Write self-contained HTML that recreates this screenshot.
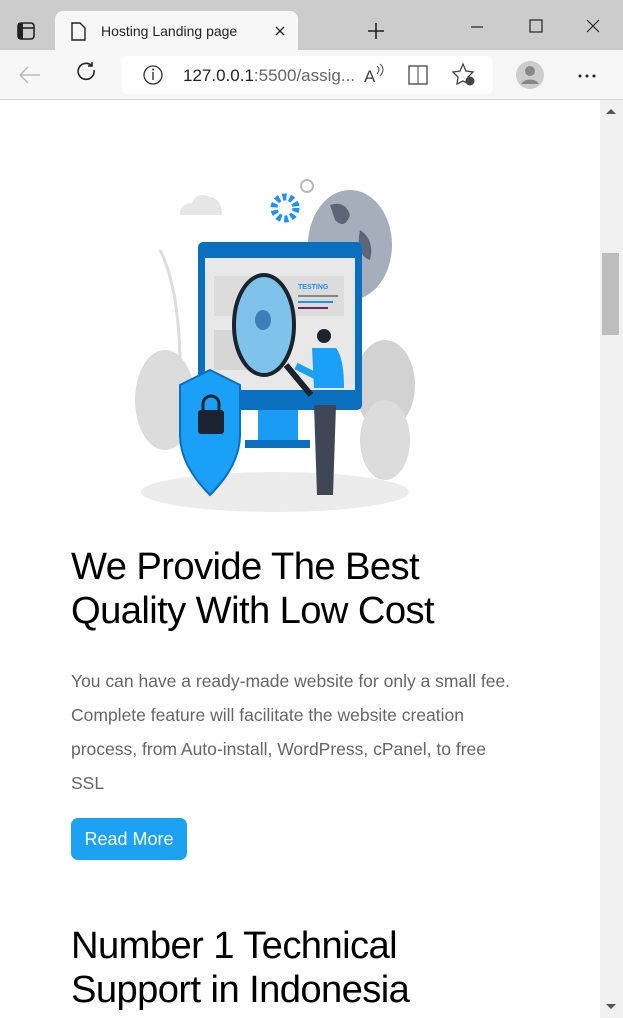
<!DOCTYPE html>
<html><head><style>
*{margin:0;padding:0;box-sizing:border-box}
body{width:623px;height:1018px;overflow:hidden;background:#fff;font-family:"Liberation Sans",sans-serif;position:relative}
.tabbar{position:absolute;left:0;top:0;width:623px;height:50px;background:#cccccc}
.tab{position:absolute;left:55px;top:11px;width:243px;height:40px;background:#f7f7f7;border-radius:8px 8px 0 0}
.toolbar{position:absolute;left:0;top:50px;width:623px;height:50px;background:#f7f7f7;border-bottom:1px solid #d6d6d6}
.url{position:absolute;left:121px;top:56px;width:372px;height:38px;background:#fff;border-radius:6px}
.sb{position:absolute;left:600px;top:100px;width:23px;height:918px;background:#f1f1f1}
h1{position:absolute;left:71px;font-size:38.2px;font-weight:normal;line-height:44px;color:#000;letter-spacing:-0.6px;font-family:"Liberation Sans",sans-serif}
p{position:absolute;left:71px;top:664px;width:450px;font-size:17.5px;line-height:34px;color:#666}
.btn{position:absolute;left:71px;top:818px;width:116px;height:42px;background:#1da1f2;border-radius:7px;color:#fff;font-size:18px;line-height:42px;text-align:center}
</style></head><body>
<div class="tabbar"></div>
<div class="tab"></div>
<svg width="623" height="50" style="position:absolute;left:0;top:0">
<rect x="18" y="23" width="16" height="16" rx="3" fill="none" stroke="#222" stroke-width="1.6"/><line x1="18" y1="28" x2="34" y2="28" stroke="#222" stroke-width="1.6"/><rect x="18" y="23" width="5" height="16" fill="#222"/>
<path d="M72 23h8l5 5v12h-13z" fill="none" stroke="#222" stroke-width="1.4"/>
<text x="101" y="36" font-size="14" fill="#222" font-family="Liberation Sans">Hosting Landing page</text>
<path d="M276 27l8 8M284 27l-8 8" stroke="#222" stroke-width="1.4"/>
<path d="M368 31h16M376 23v16" stroke="#222" stroke-width="1.6"/>
<line x1="471" y1="27" x2="483" y2="27" stroke="#222" stroke-width="1.2"/>
<rect x="530" y="20" width="12" height="12" fill="none" stroke="#222" stroke-width="1.2"/>
<path d="M587 20l12 12M599 20l-12 12" stroke="#222" stroke-width="1.2"/>
</svg>
<div class="toolbar"></div>
<div class="url"></div>
<svg width="623" height="100" style="position:absolute;left:0;top:0">
<path d="M20 75h20M20 75l8-8M20 75l8 8" stroke="#bbb" stroke-width="1.5" fill="none"/>
<path d="M94 70a8 8 0 1 1 -3 -5M92 62v4h-4" stroke="#222" stroke-width="1.6" fill="none"/>
<circle cx="153" cy="75" r="9" fill="none" stroke="#333" stroke-width="1.3"/><line x1="153" y1="72" x2="153" y2="80" stroke="#333" stroke-width="1.4"/><circle cx="153" cy="69.5" r="1" fill="#333"/>
<text x="183" y="81" font-size="17" fill="#222" font-family="Liberation Sans">127.0.0.1<tspan fill="#666">:5500/assig...</tspan></text>
<text x="364" y="82" font-size="17" fill="#444" font-family="Liberation Sans">A</text><path d="M377 66q4 3 0 8M380 64q6 5 0 12" stroke="#444" fill="none"/>
<rect x="409" y="66" width="18" height="18" fill="none" stroke="#444" stroke-width="1.3"/><line x1="418" y1="66" x2="418" y2="84" stroke="#444"/>
<path d="M463 64l3 7 7 1-5 5 1 7-6-3-6 3 1-7-5-5 7-1z" fill="none" stroke="#444" stroke-width="1.3"/><circle cx="470" cy="81" r="4.5" fill="#444"/>
<circle cx="530" cy="75" r="14" fill="#ccc"/><circle cx="530" cy="71" r="5" fill="#888"/><path d="M521 84a10 8 0 0 1 18 0" fill="#888"/>
<circle cx="580" cy="76" r="1.5" fill="#222"/><circle cx="587" cy="76" r="1.5" fill="#222"/><circle cx="594" cy="76" r="1.5" fill="#222"/>
</svg>
<div class="sb"></div>
<svg width="23" height="918" style="position:absolute;left:600px;top:100px">
<path d="M6 14h10l-5-5z" fill="#555"/><rect x="2" y="153" width="17" height="82" fill="#bdbdbd"/><path d="M6 904h10l-5 5z" fill="#555"/>
</svg>
<svg width="600" height="420" style="position:absolute;left:0;top:100px" viewBox="0 100 600 420">
<ellipse cx="275" cy="492" rx="134" ry="20" fill="#ececec"/>
<path d="M180 215q0-12 12-12q5-12 18-6q12 2 12 18z" fill="#e6e6e6"/>
<path d="M160 250q20 40 20 120" stroke="#ddd" stroke-width="3" fill="none"/>
<ellipse cx="165" cy="400" rx="30" ry="50" fill="#dcdcdc"/>
<ellipse cx="385" cy="385" rx="30" ry="45" fill="#d2d2d2"/>
<ellipse cx="385" cy="440" rx="25" ry="40" fill="#dcdcdc"/>
<ellipse cx="350" cy="245" rx="42" ry="55" fill="#a6aebb"/>
<path d="M330 205q15-5 20 10q-5 15-15 5z M360 230q15 10 10 30q-15-5-10-30z" fill="#5d6676"/>
<circle cx="285" cy="208" r="11" fill="none" stroke="#1e90ff" stroke-width="7" stroke-dasharray="4 3"/>
<circle cx="307" cy="186" r="6" fill="none" stroke="#bbb" stroke-width="2"/>
<rect x="198" y="242" width="164" height="168" rx="5" fill="#0b6fc0"/>
<rect x="205" y="258" width="150" height="132" fill="#e8e8e8"/>
<rect x="214" y="276" width="130" height="40" fill="#dcdcdc"/>
<rect x="214" y="330" width="40" height="40" fill="#d6d6d6"/>
<text x="298" y="289" font-size="7" fill="#1e90ff" font-weight="bold">TESTING</text>
<rect x="298" y="295" width="40" height="2" fill="#888"/><rect x="298" y="301" width="35" height="2" fill="#1e90ff"/><rect x="298" y="307" width="30" height="2" fill="#6a2a5a"/>
<rect x="258" y="410" width="40" height="35" fill="#1a9cf5"/><rect x="245" y="440" width="65" height="8" fill="#0b6fc0"/>
<ellipse cx="264" cy="325" rx="30" ry="50" fill="#7fc3ea" stroke="#1b2230" stroke-width="4"/>
<ellipse cx="263" cy="320" rx="8" ry="10" fill="#3a7fb5"/>
<path d="M286 365l25 30" stroke="#1b2230" stroke-width="6"/>
<path d="M180 385l30-15l30 15v50q0 30-30 60q-30-30-30-60z" fill="#1aa0f7" stroke="#0b6fc0" stroke-width="2"/>
<rect x="198" y="410" width="26" height="24" rx="3" fill="#1b2230"/><path d="M203 410v-6a8 8 0 0 1 16 0v6" stroke="#1b2230" stroke-width="3" fill="none"/>
<circle cx="324" cy="336" r="7" fill="#1b2230"/>
<path d="M312 348h24q8 10 8 40h-30z" fill="#1aa0f7"/>
<path d="M296 366l20 10" stroke="#1aa0f7" stroke-width="7"/>
<path d="M314 405h22l-3 90h-16z" fill="#3f4656"/>
</svg>
<h1 style="top:545px">We Provide The Best<br>Quality With Low Cost</h1>
<p>You can have a ready-made website for only a small fee. Complete feature will facilitate the website creation process, from Auto-install, WordPress, cPanel, to free SSL</p>
<div class="btn">Read More</div>
<h1 style="top:924px">Number 1 Technical<br>Support in Indonesia</h1>
</body></html>
